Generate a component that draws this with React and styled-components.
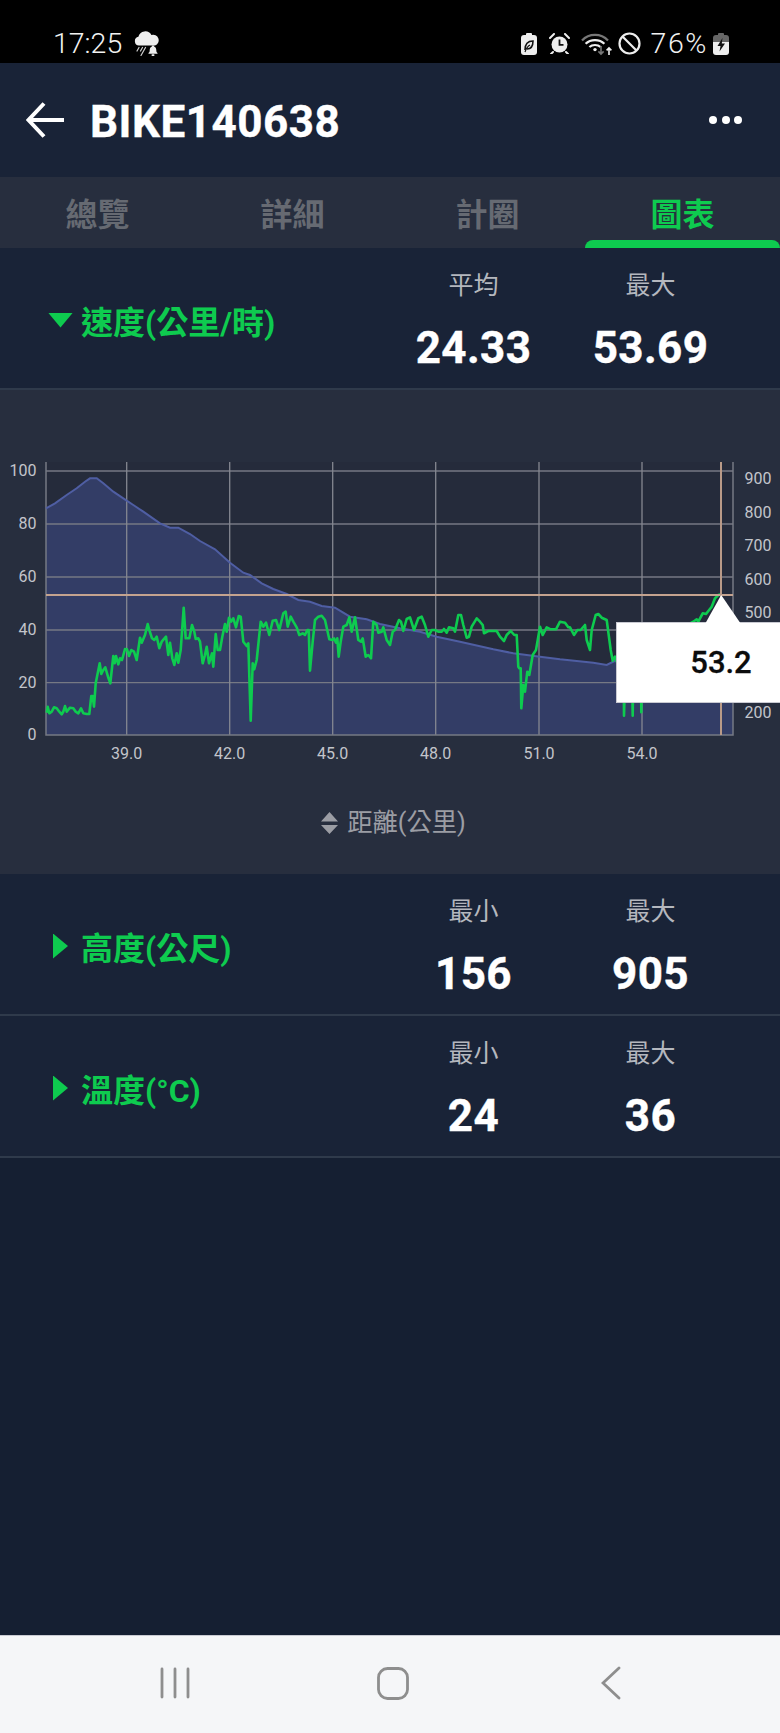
import React from 'react';
import styled, { createGlobalStyle } from 'styled-components';

const FONT = `Roboto, "Noto Sans CJK TC", sans-serif`;
const GREEN = '#0ecb4f';

const Global = createGlobalStyle`
  html, body { margin: 0; padding: 0; background: #151f32; }
  body { font-family: ${FONT}; }
`;

const Page = styled.div`
  width: 780px; height: 1733px; overflow: hidden;
  display: flex; flex-direction: column;
  background: #151f32; font-family: ${FONT};
`;

/* status bar */
const StatusBar = styled.div`
  height: 63px; box-sizing: border-box; padding: 24px 51px 0 53px;
  background: #000; color: #f2f2f2;
  display: flex; align-items: center; justify-content: space-between;
`;
const StatusGroup = styled.div`display: flex; align-items: center;`;
const StatusText = styled.span`
  font-size: 28.500px; font-weight: 300; line-height: 30px;
  letter-spacing: ${p => p.$spacing || 0}px;
  margin-left: ${p => p.$gap || 0}px;
`;
const StatusIcon = styled.svg`
  display: block; flex: none; margin-left: ${p => p.$gap || 0}px;
`;

/* header */
const Header = styled.header`
  height: 114px; box-sizing: border-box; background: #192337;
  display: flex; align-items: center; padding: 0 38px 0 26px;
`;
const BackIcon = styled.svg`display: block; flex: none; margin-right: 26px;`;
const Title = styled.h1`
  flex: 1; margin: 0; color: #fff; font-size: 44px; line-height: 50px; font-weight: 700;
  letter-spacing: 0.5px; -webkit-text-stroke: 0.4px #fff; padding-top: 4px;
`;
const MoreDots = styled.div`display: flex; gap: 4.5px;`;
const Dot = styled.span`width: 8px; height: 8px; border-radius: 50%; background: #fff;`;

/* tabs */
const Tabs = styled.nav`
  height: 71px; background: #272e3e; display: grid; grid-template-columns: repeat(4, 195px);
`;
const Tab = styled.div`
  position: relative; height: 71px; box-sizing: border-box; padding-top: 5px;
  text-align: center; font-size: 32px; font-weight: 700; line-height: 66px;
  color: ${p => (p.$active ? GREEN : '#666a72')};
  ${p => p.$active && `
    &::after {
      content: ''; position: absolute; left: 0; right: 0; bottom: 0; height: 8px;
      background: ${GREEN}; border-radius: 8px 8px 0 0;
    }
  `}
`;

/* metric rows */
const Row = styled.section`
  height: 142px; box-sizing: border-box; background: #192337;
  border-bottom: 2px solid #2f3a4b;
  display: grid; grid-template-columns: 1fr 177px 177px; padding: 0 41px 0 48px;
`;
const RowTitle = styled.div`
  display: flex; align-items: center; gap: 8px; padding-top: 4px; height: 140px; box-sizing: border-box;
  color: ${GREEN}; font-size: 32px; font-weight: 700;
`;
const Caret = styled.span`
  flex: none; width: 25px; height: 25px; display: flex; align-items: center; justify-content: center;
  &::before {
    content: ''; display: block; background: ${GREEN};
    width: ${p => (p.$open ? 25 : 15)}px;
    height: ${p => (p.$open ? 15 : 25)}px;
    clip-path: ${p => (p.$open ? 'polygon(0 0, 100% 0, 50% 100%)' : 'polygon(0 0, 100% 50%, 0 100%)')};
  }
`;
const Stat = styled.div`
  display: flex; flex-direction: column; align-items: center; padding-top: 21px;
`;
const StatLabel = styled.div`
  color: #b4b7be; font-size: 25px; line-height: 34px;
`;
const StatValue = styled.div`
  color: #fff; font-size: 44px; font-weight: 700; line-height: 50px; margin-top: 20px; letter-spacing: 0.4px;
  -webkit-text-stroke: 0.4px #fff;
`;

/* chart */
const ChartPanel = styled.section`
  height: 484px; background: #272e3e; display: flex; flex-direction: column;
`;
const ChartFrame = styled.div`position: relative; height: 385px;`;
const ChartSvg = styled.svg`display: block;`;
const AxisLabel = styled.text`
  font-family: Roboto, sans-serif; font-size: 16px; fill: #c3c5cb;
`;
const Tooltip = styled.div`
  position: absolute; left: 616px; top: 232px; width: 164px; height: 81px; box-sizing: border-box;
  background: #fff; border: 1px solid #c9cad2; border-right: 0;
  display: flex; align-items: center; padding-left: 104px;
  &::before {
    content: ''; position: absolute; left: 88px; top: -28px; width: 36px; height: 29px;
    background: #fff; clip-path: polygon(0 100%, 45% 0, 100% 100%);
  }
`;
const TooltipValue = styled.span`
  width: 0; display: flex; justify-content: center; white-space: nowrap;
  color: #0c0c0c; font-size: 31px; font-weight: 500; line-height: 36px;
  -webkit-text-stroke: 0.3px #0c0c0c;
`;
const AxisSwitch = styled.div`
  display: flex; align-items: center; justify-content: center; gap: 9px; padding-top: 28px;
  color: #9b9da4; font-size: 25.300px; line-height: 40px; margin-left: 7px;
`;
const SwapIcon = styled.svg`display: block; flex: none;`;

const Spacer = styled.div`flex: 1;`;

/* android nav */
const NavBar = styled.footer`
  height: 98px; box-sizing: border-box; background: #f5f6f8; border-top: 1px solid #c8cad2;
  display: grid; grid-template-columns: repeat(3, 218px); justify-content: center; align-items: center;
  padding: 0 0 3px 5px;
`;
const NavIcon = styled.svg`display: block; justify-self: center;`;

/* chart data, traced in the coordinates of the page */
const fromA = (pts) => pts.map(([x, y]) => [30 + x / 3, 570 + y / 3]);
const fromB = (pts) => pts.map(([x, y]) => [250 + x / 3, 570 + y / 3]);
const fromC = (pts) => pts.map(([x, y]) => [480 + x / 3, 570 + y / 3]);

const speed = [
  ...fromA([[50,428],[53,410],[58,430],[65,425],[72,412],[80,415],[88,425],[95,433],[100,425],[105,408],[110,425],[120,413],[130,415],[137,425],[145,430],[153,415],[160,430],[170,432],[178,432],[184,378],[188,378],[192,410],[197,340],[203,310],[209,280],[214,312],[220,300],[226,292],[234,320],[241,340],[250,258],[254,280],[258,258],[265,283],[270,265],[276,270],[285,237],[291,238],[297,258],[304,240],[312,245],[320,270],[330,203],[335,218],[345,195],[353,162],[358,180],[366,205],[373,210],[380,200],[388,235],[395,215],[408,200],[415,255],[420,218],[427,265],[433,285],[440,250],[445,278],[452,240],[461,113],[467,205],[478,205],[486,165],[493,185],[497,207],[505,205],[510,215],[518,280],[524,258],[530,230],[537,280],[546,250],[550,290],[557,192],[563,240],[570,240],[577,200],[585,162],[590,185],[597,143],[603,155],[610,145],[618,172],[626,138],[632,140],[640,215],[650,228],[655,220],[662,452],[668,280],[673,298],[680,270],[692,155],[700,170],[708,158],[718,195]]),
  ...fromB([[68,152],[78,150],[88,180],[100,130],[107,125],[113,170],[122,140],[130,155],[140,172],[148,195],[158,190],[165,195],[172,180],[176,180],[180,302],[188,215],[195,150],[205,140],[215,137],[225,150],[238,208],[247,210],[252,205],[258,218],[262,205],[266,260],[272,215],[280,170],[290,165],[298,142],[305,185],[315,142],[325,210],[333,215],[338,205],[347,260],[355,255],[363,265],[370,155],[380,165],[385,188],[395,185],[400,172],[410,210],[420,225],[428,185],[435,180],[447,150],[453,155],[460,183],[470,147],[480,142],[492,180],[505,145],[515,140],[525,165],[535,200],[545,180],[555,180],[565,185],[575,185],[582,177],[590,188],[597,172],[610,175],[615,185],[625,135],[633,135],[640,165],[650,203],[657,200],[665,170],[680,145],[690,155]]),
  ...fromC([[8,165],[12,190],[25,183],[50,183],[60,200],[72,213],[80,195],[92,183],[103,195],[110,195],[115,290],[118,295],[122,295],[124,415],[130,345],[135,365],[142,305],[148,315],[158,255],[168,240],[180,170],[188,195],[200,172],[212,178],[228,178],[240,155],[255,158],[265,172],[270,172],[282,195],[292,180],[302,180],[315,165],[320,210],[330,240],[335,180],[347,135],[355,132],[365,143],[380,150],[392,240],[398,272],[405,260],[420,300],[431,300],[432,437],[436,300],[456,300],[458,437],[460,300],[483,300],[484,427],[486,300],[560,200],[640,155],[650,148],[655,155],[668,130],[678,132],[695,110],[705,85],[715,75],[723,73]]),
];

const altTop = [
  ...[[138,205],[165,190],[200,165],[230,145],[255,125],[270,115],[290,115],[310,130],[340,155],[370,175],[400,195],[430,215],[480,250],[510,263],[535,263],[570,282],[600,303],[645,328],[690,368],[730,398],[750,405],[785,430],[820,447],[860,462],[895,480],[930,485],[965,498],[1005,503],[1050,530],[1100,538]].map(([x, y]) => [x / 3, 440 + y / 3]),
  ...[[0,552],[60,565],[120,575],[170,590],[240,605],[340,628],[400,640],[480,650],[540,658],[640,668],[680,675],[710,660],[800,640],[900,630],[1060,610]].map(([x, y]) => [380 + x / 3, 440 + y / 3]),
];

const toPoints = (pts) => pts.map(([x, y]) => `${x.toFixed(1)},${y.toFixed(1)}`).join(' ');

const PLOT = { left: 46, right: 733, top: 462, bottom: 735 };
const hGrid = [471, 524, 577, 630, 682.7];
const vGrid = [
  { x: 126.7, label: '39.0' }, { x: 229.7, label: '42.0' }, { x: 332.7, label: '45.0' },
  { x: 435.7, label: '48.0' }, { x: 539, label: '51.0' }, { x: 642, label: '54.0' },
];
const leftAxis = [['100', 471], ['80', 524], ['60', 577], ['40', 630], ['20', 682.7], ['0', 735]];
const rightAxis = [['900', 479], ['800', 512.7], ['700', 546], ['600', 579.5], ['500', 613], ['200', 713]];

function Chart() {
  const area = toPoints([[PLOT.left, PLOT.bottom], ...altTop, [PLOT.right, PLOT.bottom]]);
  return (
    <ChartSvg width="780" height="385" viewBox="0 390 780 385">
      <rect x={PLOT.left} y={PLOT.top} width={PLOT.right - PLOT.left} height={PLOT.bottom - PLOT.top} fill="#252b3b" />
      <polygon points={area} fill="#333d66" />
      {hGrid.map((y) => (
        <line key={y} x1={PLOT.left} x2={PLOT.right} y1={y} y2={y} stroke="#767984" strokeWidth="1.3" />
      ))}
      {vGrid.map((g) => (
        <line key={g.x} x1={g.x} x2={g.x} y1={PLOT.top} y2={PLOT.bottom} stroke="#858791" strokeWidth="1.3" />
      ))}
      <path d={`M${PLOT.left} ${PLOT.top}V${PLOT.bottom}H${PLOT.right}V${PLOT.top}`} fill="none" stroke="#767984" strokeWidth="1.5" />
      <polyline points={toPoints(altTop)} fill="none" stroke="#4f5ea3" strokeWidth="2" />
      <polyline points={toPoints(speed)} fill="none" stroke="#0ecb4f" strokeWidth="2.6" strokeLinejoin="round" />
      <line x1={PLOT.left} x2={PLOT.right} y1="595" y2="595" stroke="#c4a38f" strokeWidth="1.8" />
      <line x1="721" x2="721" y1={PLOT.top} y2={PLOT.bottom} stroke="#b99a88" strokeWidth="2" />
      {leftAxis.map(([t, y]) => (
        <AxisLabel key={t} x="36.500" y={y + 5} textAnchor="end">{t}</AxisLabel>
      ))}
      {rightAxis.map(([t, y]) => (
        <AxisLabel key={t} x="744.500" y={y + 5}>{t}</AxisLabel>
      ))}
      {vGrid.map((g) => (
        <AxisLabel key={g.label} x={g.x} y="758.5" textAnchor="middle">{g.label}</AxisLabel>
      ))}
    </ChartSvg>
  );
}

function StatusLeft() {
  return (
    <StatusGroup>
      <StatusText>17:25</StatusText>
      <StatusIcon $gap={12} width="26" height="25" viewBox="0 0 26 25">
        <path d="M5 14.5a4.4 4.4 0 0 1-.6-8.700A7 7 0 0 1 17.400 4.100 5.300 5.300 0 0 1 21 14.500z" fill="#eee" />
        <g stroke="#cfcfcf" strokeWidth="1.2" strokeLinecap="round">
          <path d="M5 16.500l-2 3.500M8.500 16.500l-2 3.500M11.500 16.500l-4.500 8" />
        </g>
        <path d="M19 14.500c.8 0 1.300.5 1.300 1.200 1.700.6 2 2 2 3.600 0 1.400.4 2 1.200 2.800v.7H14.500v-.7c.8-.8 1.200-1.400 1.200-2.800 0-1.600.3-3 2-3.600 0-.7.5-1.200 1.300-1.200z" fill="#eee" />
        <rect x="17.500" y="23.300" width="3" height="1.700" rx=".8" fill="#eee" />
      </StatusIcon>
    </StatusGroup>
  );
}

function StatusRight() {
  return (
    <StatusGroup>
      <StatusIcon width="16" height="22" viewBox="0 0 16 22">
        <rect x="5" y="0" width="6" height="3" rx="1" fill="#eee" />
        <rect x="0" y="2" width="16" height="20" rx="3" fill="#eee" />
        <path d="M4 17c0-6 3-9 8-9 0 5-2 8-6 8" fill="none" stroke="#111" strokeWidth="1.6" />
        <path d="M4 19c1-3 3-6 5-7" fill="none" stroke="#111" strokeWidth="1.2" />
      </StatusIcon>
      <StatusIcon $gap={12} width="21" height="21" viewBox="0 0 21 21">
        <circle cx="10.500" cy="11.500" r="8" fill="#eee" />
        <path d="M10.500 6.500v5.300h4" fill="none" stroke="#111" strokeWidth="1.8" />
        <path d="M1 5l4-4M20 5l-4-4M4 19l-2 2M17 19l2 2" stroke="#eee" strokeWidth="2" strokeLinecap="round" />
      </StatusIcon>
      <StatusIcon $gap={11} width="32" height="24" viewBox="0 0 32 24">
        <path d="M1 8.500C8 1 20 1 27 8.500" fill="none" stroke="#777" strokeWidth="2.2" />
        <path d="M4.600 11.800c5-5 13.800-5 18.800 0" fill="none" stroke="#eee" strokeWidth="2.2" />
        <path d="M8.400 15c3-2.700 8.200-2.700 11.200 0" fill="none" stroke="#eee" strokeWidth="2.2" />
        <circle cx="14" cy="17.600" r="1.700" fill="#eee" />
        <path d="M20 14v8m-2.600-2.600l2.600 2.600 2.600-2.600" fill="none" stroke="#777" strokeWidth="1.6" />
        <path d="M28 23v-7m-2.400 2.400l2.400-2.400 2.400 2.400" fill="none" stroke="#eee" strokeWidth="1.6" />
      </StatusIcon>
      <StatusIcon $gap={5} width="23" height="23" viewBox="0 0 23 23">
        <circle cx="11.500" cy="11.500" r="10" fill="none" stroke="#eee" strokeWidth="2.2" />
        <path d="M4.500 4.500l14 14" stroke="#eee" strokeWidth="2.2" />
      </StatusIcon>
      <StatusText $gap={10} $spacing={1.6}>76%</StatusText>
      <StatusIcon $gap={5} width="16" height="22" viewBox="0 0 16 22">
        <rect x="5" y="0" width="6" height="3" rx="1" fill="#666" />
        <path d="M3 2h10a3 3 0 0 1 3 3v4H0V5a3 3 0 0 1 3-3z" fill="#666" />
        <path d="M0 9h16v10a3 3 0 0 1-3 3H3a3 3 0 0 1-3-3z" fill="#eee" />
        <path d="M9.500 5L4.500 13h3l-1 5.500L12 10.500H8.800z" fill="#111" />
      </StatusIcon>
    </StatusGroup>
  );
}

function MetricRow({ title, open, stats }) {
  return (
    <Row>
      <RowTitle>
        <Caret $open={open} />
        <span>{title}</span>
      </RowTitle>
      {stats.map(([label, value]) => (
        <Stat key={label}>
          <StatLabel>{label}</StatLabel>
          <StatValue>{value}</StatValue>
        </Stat>
      ))}
    </Row>
  );
}

export default function App() {
  return (
    <Page>
      <Global />
      <StatusBar>
        <StatusLeft />
        <StatusRight />
      </StatusBar>
      <Header>
        <BackIcon width="38" height="36" viewBox="0 0 38 36">
          <path d="M18 1.500L2.500 18 18 34.500M2.500 18H38" fill="none" stroke="#fff" strokeWidth="4" />
        </BackIcon>
        <Title>BIKE140638</Title>
        <MoreDots><Dot /><Dot /><Dot /></MoreDots>
      </Header>
      <Tabs>
        <Tab>總覽</Tab>
        <Tab>詳細</Tab>
        <Tab>計圈</Tab>
        <Tab $active>圖表</Tab>
      </Tabs>
      <MetricRow title="速度(公里/時)" open stats={[['平均', '24.33'], ['最大', '53.69']]} />
      <ChartPanel>
        <ChartFrame>
          <Chart />
          <Tooltip><TooltipValue>53.2</TooltipValue></Tooltip>
        </ChartFrame>
        <AxisSwitch>
          <SwapIcon width="17" height="22" viewBox="0 0 17 22">
            <path d="M8.500 0L17 9.500H0zM0 13h17l-8.500 9z" fill="#9b9da4" />
          </SwapIcon>
          <span>距離(公里)</span>
        </AxisSwitch>
      </ChartPanel>
      <MetricRow title="高度(公尺)" stats={[['最小', '156'], ['最大', '905']]} />
      <MetricRow title="溫度(°C)" stats={[['最小', '24'], ['最大', '36']]} />
      <Spacer />
      <NavBar>
        <NavIcon width="30" height="32" viewBox="0 0 30 32">
          <path d="M2 2v28M15 2v28M28 2v28" stroke="#8e8e8e" strokeWidth="2.8" strokeLinecap="round" />
        </NavIcon>
        <NavIcon width="32" height="33" viewBox="0 0 32 33">
          <rect x="1.500" y="1.500" width="29" height="30" rx="9" fill="none" stroke="#8e8e8e" strokeWidth="2.8" />
        </NavIcon>
        <NavIcon width="20" height="34" viewBox="0 0 20 34">
          <path d="M18 2L2 17l16 15" fill="none" stroke="#8e8e8e" strokeWidth="2.8" strokeLinecap="round" />
        </NavIcon>
      </NavBar>
    </Page>
  );
}
